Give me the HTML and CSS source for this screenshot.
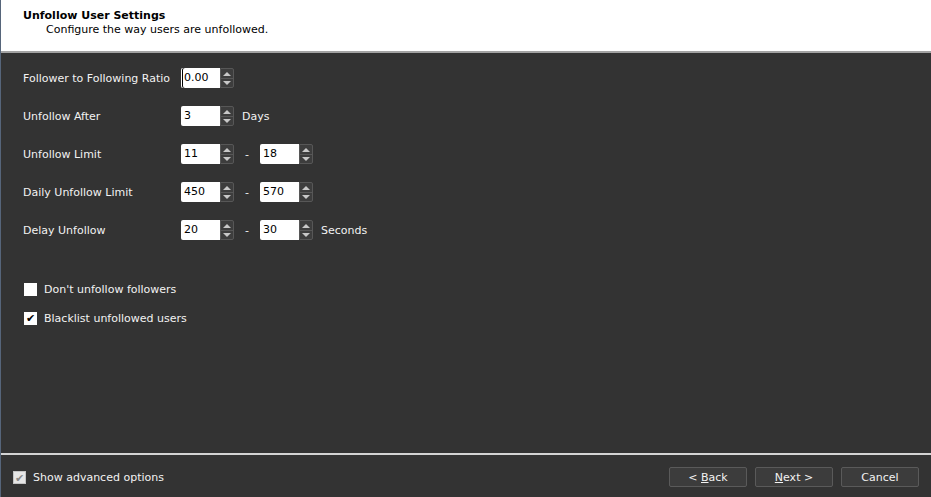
FILE: index.html
```html
<!DOCTYPE html>
<html lang="en">
<head>
    <meta charset="UTF-8">
    <title>Unfollow User Settings</title>
    <link rel="stylesheet" href="styles.css">
</head>
<body>
    <div class="wizard">
        <div class="header">
            <h1>Unfollow User Settings</h1>
            <p>Configure the way users are unfollowed.</p>
        </div>

        <div class="content">
            <div class="row">
                <label class="field-label">Follower to Following Ratio</label>
                <div class="spin"><span class="spin-value caret">0.00</span><span class="spin-btns"><i class="up"></i><i class="down"></i></span></div>
            </div>
            <div class="row">
                <label class="field-label">Unfollow After</label>
                <div class="spin"><span class="spin-value">3</span><span class="spin-btns"><i class="up"></i><i class="down"></i></span></div>
                <span class="unit">Days</span>
            </div>
            <div class="row">
                <label class="field-label">Unfollow Limit</label>
                <div class="spin"><span class="spin-value">11</span><span class="spin-btns"><i class="up"></i><i class="down"></i></span></div>
                <span class="dash">-</span>
                <div class="spin"><span class="spin-value">18</span><span class="spin-btns"><i class="up"></i><i class="down"></i></span></div>
            </div>
            <div class="row">
                <label class="field-label">Daily Unfollow Limit</label>
                <div class="spin"><span class="spin-value">450</span><span class="spin-btns"><i class="up"></i><i class="down"></i></span></div>
                <span class="dash">-</span>
                <div class="spin"><span class="spin-value">570</span><span class="spin-btns"><i class="up"></i><i class="down"></i></span></div>
            </div>
            <div class="row">
                <label class="field-label">Delay Unfollow</label>
                <div class="spin"><span class="spin-value">20</span><span class="spin-btns"><i class="up"></i><i class="down"></i></span></div>
                <span class="dash">-</span>
                <div class="spin"><span class="spin-value">30</span><span class="spin-btns"><i class="up"></i><i class="down"></i></span></div>
                <span class="unit">Seconds</span>
            </div>

            <div class="checks">
                <div class="check"><span class="box"></span>Don't unfollow followers</div>
                <div class="check"><span class="box checked">&#10004;</span>Blacklist unfollowed users</div>
            </div>
        </div>

        <div class="footer">
            <div class="check advanced"><span class="box checked">&#10004;</span>Show advanced options</div>
            <div class="buttons">
                <button>&lt; <u>B</u>ack</button>
                <button><u>N</u>ext &gt;</button>
                <button>Cancel</button>
            </div>
        </div>
    </div>
</body>
</html>
```

FILE: styles.css
```css
body {
    margin: 0;
    font-family: "DejaVu Sans", Verdana, sans-serif;
    font-size: 11px;
    background-color: #333333;
    color: #f2f2f2;
}

.wizard {
    height: 497px;
    display: flex;
    flex-direction: column;
    border-left: 1px solid #56657a;
    box-sizing: border-box;
}

.header {
    height: 53px;
    flex-shrink: 0;
    background-color: #fff;
    color: #000;
    padding: 9px 0 0 22px;
    box-sizing: border-box;
    border-bottom: 2px solid #a3a3a3;
}

.header h1 {
    font-size: 11px;
    font-weight: bold;
    margin: 0;
    line-height: 14px;
}

.header p {
    margin: 0;
    padding-left: 23px;
    line-height: 14px;
}

.content {
    flex: 1;
    padding: 15px 0 0 22px;
}

.row {
    display: flex;
    align-items: center;
    height: 20px;
    margin-bottom: 18px;
}

.field-label {
    width: 158px;
}

.spin {
    display: flex;
    height: 20px;
}

.spin-value {
    width: 36px;
    background-color: #fff;
    color: #000;
    line-height: 20px;
    padding-left: 3px;
    border-radius: 2px 0 0 2px;
}

.caret {
    box-shadow: inset 1px 0 0 #fff, inset 2px 0 0 #000;
}

.spin-btns {
    width: 12px;
    border: 1px solid #575757;
    border-radius: 0 2px 2px 0;
    background-color: #3d3d3d;
    display: flex;
    flex-direction: column;
}

.spin-btns i {
    flex: 1;
    position: relative;
}

.spin-btns .up {
    border-bottom: 1px solid #575757;
}

.spin-btns i::after {
    content: "";
    position: absolute;
    left: 2px;
    top: 3px;
    border-left: 4px solid transparent;
    border-right: 4px solid transparent;
}

.spin-btns .up::after {
    border-bottom: 4px solid #c8c8c8;
}

.spin-btns .down::after {
    top: 2px;
    border-top: 4px solid #c8c8c8;
}

.unit {
    margin-left: 8px;
}

.dash {
    width: 26px;
    text-align: center;
}

.checks {
    margin-top: 43px;
}

.check {
    display: flex;
    align-items: center;
    height: 13px;
    margin-bottom: 16px;
}

.box {
    width: 13px;
    height: 13px;
    background-color: #fff;
    color: #000;
    margin: 0 7px 0 1px;
    font-size: 11px;
    line-height: 13px;
    text-align: center;
    box-sizing: border-box;
}

.footer {
    height: 42px;
    flex-shrink: 0;
    border-top: 2px solid #d4d4d4;
    display: flex;
    align-items: center;
    justify-content: space-between;
    padding: 0 12px 0 12px;
}

.footer .check {
    margin: 2px 0 0 0;
}

.advanced .box {
    background-color: #e6e6e6;
    color: #8a8a8a;
    margin: 0 7px 0 0;
    border: 1px solid #c4c4c4;
}

.buttons {
    display: flex;
    gap: 8px;
    margin-top: 2px;
}

button {
    width: 78px;
    height: 20px;
    font-family: "DejaVu Sans", Verdana, sans-serif;
    font-size: 11px;
    color: #f2f2f2;
    background-color: #3c3c3c;
    border: 1px solid #5a5a5a;
    border-radius: 2px;
    padding: 0;
}
```
